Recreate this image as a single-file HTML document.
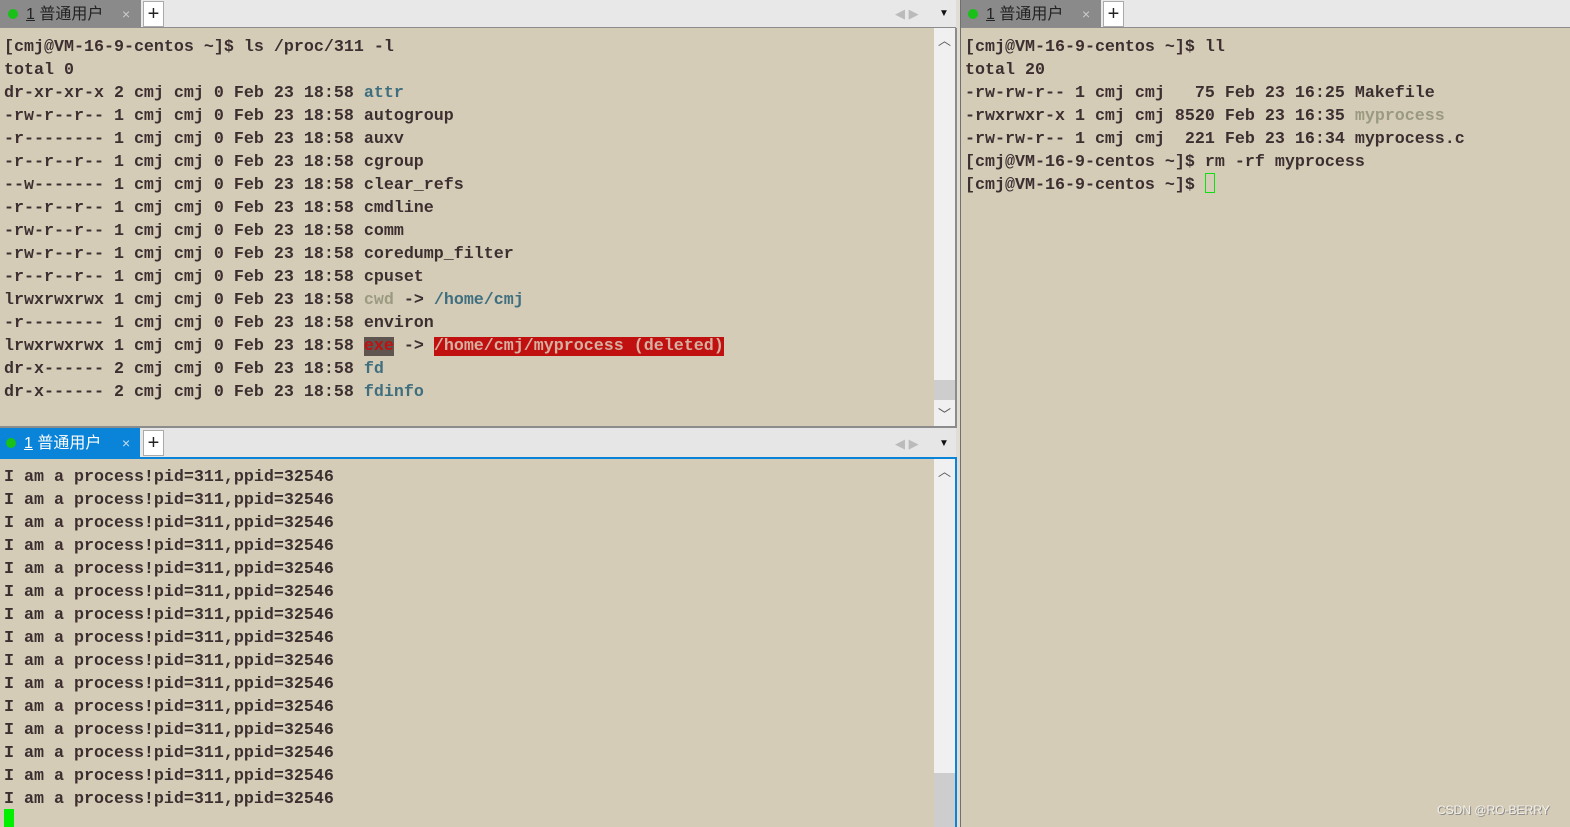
<!DOCTYPE html>
<html><head><meta charset="utf-8"><style>
*{margin:0;padding:0;box-sizing:border-box}
body{width:1570px;height:827px;background:#d5ccb8;position:relative;overflow:hidden;font-family:"Liberation Mono",monospace}
.abs{position:absolute}
.bar{background:#e8e8e8;border-bottom:1px solid #8c8c8c}
.tab{position:absolute;top:0;height:27px;background:#8a8a8a;font-family:"Liberation Sans","Noto Sans CJK SC",sans-serif;font-size:16px;color:#222;line-height:29px}
.tab .dot{position:absolute;left:8px;top:9px;width:10px;height:10px;border-radius:50%;background:#18c018}
.tab .t{position:absolute;left:26px}
.tab .t u{text-decoration:underline}
.tab .x{position:absolute;left:122px;color:#ccc;font-size:14px}
.plus{position:absolute;top:1px;width:21px;height:26px;background:#fff;border:1px solid #aaa;font-family:"Liberation Sans",sans-serif;font-size:20px;line-height:25px;text-align:center;color:#222}
.term{position:absolute;font-weight:bold;font-size:16.67px;line-height:23px;color:#3d2f30;white-space:pre}
.cy{color:#3f6f7f}
.gr{color:#9a9a80}
.sb{position:absolute;background:#f0f0f0}
.arr{position:absolute;font-family:"Liberation Sans",sans-serif;color:#555;font-size:13px}
</style></head><body>
<div class="abs bar" style="left:0;top:0;width:956px;height:28px"></div>
<div class="tab" style="left:0;width:141px"><div class="dot"></div><span class="t"><u>1</u> 普通用户</span><span class="x">×</span></div>
<div class="plus" style="left:143px">+</div>
<div class="arr" style="left:895px;top:6px;color:#bbb">◀ ▶</div>
<div class="arr" style="left:939px;top:8px;color:#111;font-size:10px">▼</div>
<div class="abs bar" style="left:960px;top:0;width:610px;height:28px"></div>
<div class="tab" style="left:960px;width:141px"><div class="dot"></div><span class="t"><u>1</u> 普通用户</span><span class="x">×</span></div>
<div class="plus" style="left:1103px">+</div>
<div class="abs" style="left:956px;top:0;width:5px;height:827px;background:#e0ddd5"></div>
<div class="abs" style="left:955px;top:28px;width:2px;height:399px;background:#8c8c8c"></div>
<div class="abs" style="left:960px;top:0;width:1px;height:827px;background:#707070"></div>
<div class="abs" style="left:0;top:426px;width:957px;height:2px;background:#8c8c8c"></div>
<div class="sb" style="left:934px;top:28px;width:21px;height:398px"></div>
<div class="abs" style="left:934px;top:380px;width:21px;height:20px;background:#cdcdcd"></div>
<div class="arr" style="left:938px;top:30px">︿</div>
<div class="arr" style="left:938px;top:404px">﹀</div>
<div class="abs" style="left:0;top:428px;width:956px;height:29px;background:#e6e6e6"></div>
<div class="tab" style="left:0;top:428px;width:140px;height:29px;background:#0a84d8;color:#fff;line-height:31px"><div class="dot" style="top:10px;left:6px"></div><span class="t" style="left:24px"><u>1</u> 普通用户</span><span class="x" style="color:#cde">×</span></div>
<div class="plus" style="left:143px;top:430px">+</div>
<div class="arr" style="left:895px;top:436px;color:#bbb">◀ ▶</div>
<div class="arr" style="left:939px;top:438px;color:#111;font-size:10px">▼</div>
<div class="abs" style="left:0;top:457px;width:957px;height:2px;background:#0a84d8"></div>
<div class="abs" style="left:955px;top:457px;width:2px;height:370px;background:#0a84d8"></div>
<div class="sb" style="left:934px;top:459px;width:21px;height:368px"></div>
<div class="abs" style="left:934px;top:773px;width:21px;height:54px;background:#cdcdcd"></div>
<div class="arr" style="left:938px;top:461px">︿</div>

<div class="term" style="left:4px;top:36px">[cmj@VM-16-9-centos ~]$ ls /proc/311 -l
total 0
dr-xr-xr-x 2 cmj cmj 0 Feb 23 18:58 <span class="cy">attr</span>
-rw-r--r-- 1 cmj cmj 0 Feb 23 18:58 autogroup
-r-------- 1 cmj cmj 0 Feb 23 18:58 auxv
-r--r--r-- 1 cmj cmj 0 Feb 23 18:58 cgroup
--w------- 1 cmj cmj 0 Feb 23 18:58 clear_refs
-r--r--r-- 1 cmj cmj 0 Feb 23 18:58 cmdline
-rw-r--r-- 1 cmj cmj 0 Feb 23 18:58 comm
-rw-r--r-- 1 cmj cmj 0 Feb 23 18:58 coredump_filter
-r--r--r-- 1 cmj cmj 0 Feb 23 18:58 cpuset
lrwxrwxrwx 1 cmj cmj 0 Feb 23 18:58 <span class="gr">cwd</span> -&gt; <span class="cy">/home/cmj</span>
-r-------- 1 cmj cmj 0 Feb 23 18:58 environ
lrwxrwxrwx 1 cmj cmj 0 Feb 23 18:58 <span style="background:#5e5450;color:#c01010">exe</span> -&gt; <span style="background:#c01010;color:#d5b0a0">/home/cmj/myprocess (deleted)</span>
dr-x------ 2 cmj cmj 0 Feb 23 18:58 <span class="cy">fd</span>
dr-x------ 2 cmj cmj 0 Feb 23 18:58 <span class="cy">fdinfo</span></div>

<div class="term" style="left:965px;top:36px">[cmj@VM-16-9-centos ~]$ ll
total 20
-rw-rw-r-- 1 cmj cmj   75 Feb 23 16:25 Makefile
-rwxrwxr-x 1 cmj cmj 8520 Feb 23 16:35 <span class="gr">myprocess</span>
-rw-rw-r-- 1 cmj cmj  221 Feb 23 16:34 myprocess.c
[cmj@VM-16-9-centos ~]$ rm -rf myprocess
[cmj@VM-16-9-centos ~]$ </div>
<div class="abs" style="left:1205px;top:173px;width:10px;height:20px;border:1.5px solid #10e010"></div>

<div class="term" style="left:4px;top:466px">I am a process!pid=311,ppid=32546
I am a process!pid=311,ppid=32546
I am a process!pid=311,ppid=32546
I am a process!pid=311,ppid=32546
I am a process!pid=311,ppid=32546
I am a process!pid=311,ppid=32546
I am a process!pid=311,ppid=32546
I am a process!pid=311,ppid=32546
I am a process!pid=311,ppid=32546
I am a process!pid=311,ppid=32546
I am a process!pid=311,ppid=32546
I am a process!pid=311,ppid=32546
I am a process!pid=311,ppid=32546
I am a process!pid=311,ppid=32546
I am a process!pid=311,ppid=32546</div>
<div class="abs" style="left:4px;top:809px;width:10px;height:18px;background:#00f000"></div>
<div class="abs" style="left:1437px;top:803px;font-family:'Liberation Sans',sans-serif;font-size:12px;color:#f4f0e8;text-shadow:1px 1px 0 #888">CSDN @RO-BERRY</div>
</body></html>
